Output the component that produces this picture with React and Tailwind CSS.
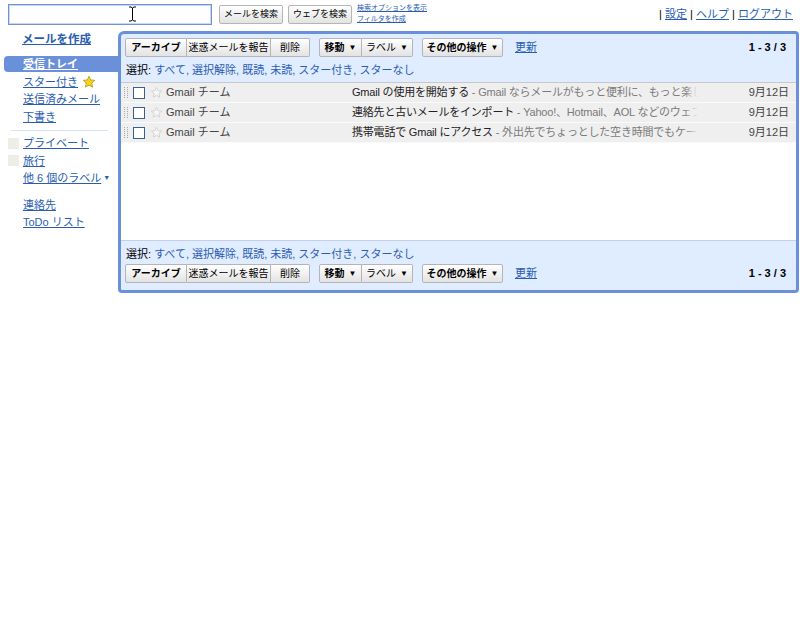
import React from "react";

const F = { fontFamily: '"Liberation Sans", Arial, "Noto Sans CJK JP", sans-serif' };

function Btn({ children, bold, className = "" }) {
  return (
    <div
      className={
        "h-[19px] flex items-center border border-[#b5b5b5] bg-gradient-to-b from-white to-[#e3e3e3] text-black whitespace-nowrap " +
        (bold ? "font-bold " : "") +
        className
      }
    >
      {children}
    </div>
  );
}

function Tri() {
  return <span className="ml-[4px] text-[8px] leading-none">▼</span>;
}

function Toolbar() {
  return (
    <div className="flex items-center h-[19px] text-[10px]">
      <div className="flex">
        <Btn bold className="rounded-l-[2px] w-[62px] justify-center">アーカイブ</Btn>
        <Btn className="border-l-0 w-[84px] justify-center">迷惑メールを報告</Btn>
        <Btn className="border-l-0 rounded-r-[2px] w-[39px] justify-center">削除</Btn>
      </div>
      <div className="flex ml-[9px]">
        <Btn bold className="rounded-l-[2px] w-[43px] justify-center">移動<Tri /></Btn>
        <Btn className="border-l-0 rounded-r-[2px] w-[51px] justify-center">ラベル<Tri /></Btn>
      </div>
      <Btn bold className="ml-[9px] rounded-[2px] w-[81px] justify-center">その他の操作<Tri /></Btn>
      <a className="ml-[12px] text-[11px] text-[#2a5db0] underline">更新</a>
      <div className="flex-1" />
      <div className="text-[11px] font-bold text-black mr-[10px]">1 - 3 / 3</div>
    </div>
  );
}

function SelectLine() {
  return (
    <div className="text-[11px] leading-[14px] text-black whitespace-nowrap">
      選択:{" "}
      <span className="text-[#2a5db0]">すべて, 選択解除, 既読, 未読, スター付き, スターなし</span>
    </div>
  );
}

function Handle() {
  return (
    <svg width="6" height="13" viewBox="0 0 6 13" className="shrink-0">
      {[0, 1].map((c) =>
        [0, 1, 2, 3, 4, 5].map((r) => (
          <rect key={c + "-" + r} x={c * 3 + 1} y={r * 2 + 1} width="1" height="1" fill="#a8a8a8" />
        ))
      )}
    </svg>
  );
}

function StarOutline() {
  return (
    <svg width="13" height="13" viewBox="0 0 24 24">
      <path
        d="M12 2.5l2.9 6.2 6.6.7-5 4.5 1.4 6.6L12 17.2 6.1 20.5l1.4-6.6-5-4.5 6.6-.7z"
        fill="#f6f6f6"
        stroke="#cccccc"
        strokeWidth="1.5"
      />
    </svg>
  );
}

function Row({ subject, snippet }) {
  return (
    <div className="flex items-center h-[20px] bg-[#efefef] border-b border-[#fafafa] text-[11px]">
      <div className="w-[10px] pl-[2px] flex items-center"><Handle /></div>
      <div className="ml-[2px] w-[12px] h-[12px] border border-[#3a5f8a] bg-white shrink-0" />
      <div className="ml-[5px] flex items-center"><StarOutline /></div>
      <div className="ml-[3px] w-[186px] text-[#444] whitespace-nowrap">Gmail チーム</div>
      <div className="relative w-[346px] overflow-hidden whitespace-nowrap text-[#222] tracking-[-0.2px]">
        {subject} <span className="text-[#7a7a7a]">- {snippet}</span>
        <div className="absolute right-0 top-0 bottom-0 w-[14px] bg-gradient-to-r from-transparent to-[#efefef]" />
      </div>
      <div className="flex-1 text-right pr-[7px] text-[11px] text-[#444] whitespace-nowrap">9月12日</div>
    </div>
  );
}

function NavLink({ children, className = "" }) {
  return (
    <div className={"pl-[23px] h-[17.5px] flex items-center text-[#2a5db0] " + className}>
      <span className="underline">{children}</span>
    </div>
  );
}

export default function App() {
  return (
    <div style={F} className="w-[800px] h-[641px] bg-white relative overflow-hidden">
      {/* top bar */}
      <div className="flex h-[31px] items-start">
        <div className="ml-[8px] mt-[4px] w-[204px] h-[21px] border border-[#6f93d6] bg-white shadow-[inset_0_0_0_1px_#c9d8f2]" />
        <Btn className="ml-[7px] mt-[5px] rounded-[2px] h-[18px] w-[64px] justify-center text-[9px]">メールを検索</Btn>
        <Btn className="ml-[5px] mt-[5px] rounded-[2px] h-[18px] w-[64px] justify-center text-[9px]">ウェブを検索</Btn>
        <div className="ml-[5px] mt-[3px] flex flex-col text-[7px] leading-[10px] text-[#2a5db0]">
          <a className="underline">検索オプションを表示</a>
          <a className="underline mt-[1px]">フィルタを作成</a>
        </div>
        <div className="flex-1" />
        <div className="mt-[6px] mr-[7px] text-[11px] text-black whitespace-nowrap">
          | <a className="underline text-[#2a5db0]">設定</a> | <a className="underline text-[#2a5db0]">ヘルプ</a> | <a className="underline text-[#2a5db0]">ログアウト</a>
        </div>
      </div>

      <div className="flex">
        {/* left nav */}
        <div className="w-[118px] shrink-0 text-[11px]">
          <div className="pl-[22px] h-[25px] text-[11.5px] font-bold text-[#2a5db0] underline">メールを作成</div>
          <div className="ml-[4px] h-[16px] bg-[#6b90da] rounded-l-[4px] pl-[19px] flex items-center text-white font-bold underline">受信トレイ</div>
          <div className="pl-[23px] h-[17.5px] mt-[1px] flex items-center text-[#2a5db0]">
            <span className="underline">スター付き</span>
            <svg width="14" height="14" viewBox="0 0 24 24" className="ml-[4px]">
              <path d="M12 2l3 6.4 7 .8-5.2 4.8 1.4 6.9L12 17.4 5.8 20.9l1.4-6.9L2 9.2l7-.8z" fill="#f7d21a" stroke="#a8951e" strokeWidth="1.3" />
            </svg>
          </div>
          <NavLink>送信済みメール</NavLink>
          <NavLink>下書き</NavLink>
          <div className="ml-[11px] mr-[10px] mt-[4px] mb-[4px] border-t border-[#d4e3fb]" />
          <div className="h-[17.5px] flex items-center">
            <div className="ml-[8px] w-[11px] h-[11px] bg-[#eeeee6]" />
            <span className="ml-[4px] text-[#2a5db0] underline">プライベート</span>
          </div>
          <div className="h-[17.5px] flex items-center">
            <div className="ml-[8px] w-[11px] h-[11px] bg-[#eeeee6]" />
            <span className="ml-[4px] text-[#2a5db0] underline">旅行</span>
          </div>
          <div className="pl-[23px] h-[17.5px] flex items-center text-[#2a5db0] whitespace-nowrap">
            <span className="underline">他 6 個のラベル</span>
            <span className="ml-[2px] text-[7px]">▼</span>
          </div>
          <NavLink className="mt-[9px]">連絡先</NavLink>
          <NavLink>ToDo リスト</NavLink>
        </div>

        {/* main panel */}
        <div className="w-[681px] h-[262px] border-[3px] border-[#6b90da] rounded-[4px] rounded-tl-[6px] bg-[#e0ecff] flex flex-col">
          <div className="h-[48px] pl-[4px] pt-[4px] flex flex-col">
            <Toolbar />
            <div className="mt-[6px] pl-[1px]"><SelectLine /></div>
          </div>
          <div className="border-t border-[#c8c8c8]">
            <Row subject="Gmail の使用を開始する" snippet="Gmail ならメールがもっと便利に、もっと楽しく" />
            <Row subject="連絡先と古いメールをインポート" snippet="Yahoo!、Hotmail、AOL などのウェブメ" />
            <Row subject="携帯電話で Gmail にアクセス" snippet="外出先でちょっとした空き時間でもケータ" />
          </div>
          <div className="h-[98px] bg-white border-b border-[#c3d0e6]" />
          <div className="flex-1 pl-[4px] pt-[6px] flex flex-col">
            <div className="pl-[1px]"><SelectLine /></div>
            <div className="mt-[3px]"><Toolbar /></div>
          </div>
        </div>
      </div>

      {/* mouse cursor overlay */}
      <svg width="9" height="16" viewBox="0 0 9 16" className="absolute left-[128px] top-[6px]">
        <path d="M1 1h2l1.5 1L6 1h2M4.5 2v12M1 15h2l1.5-1L6 15h2" stroke="#000" strokeWidth="1" fill="none" />
      </svg>
    </div>
  );
}
